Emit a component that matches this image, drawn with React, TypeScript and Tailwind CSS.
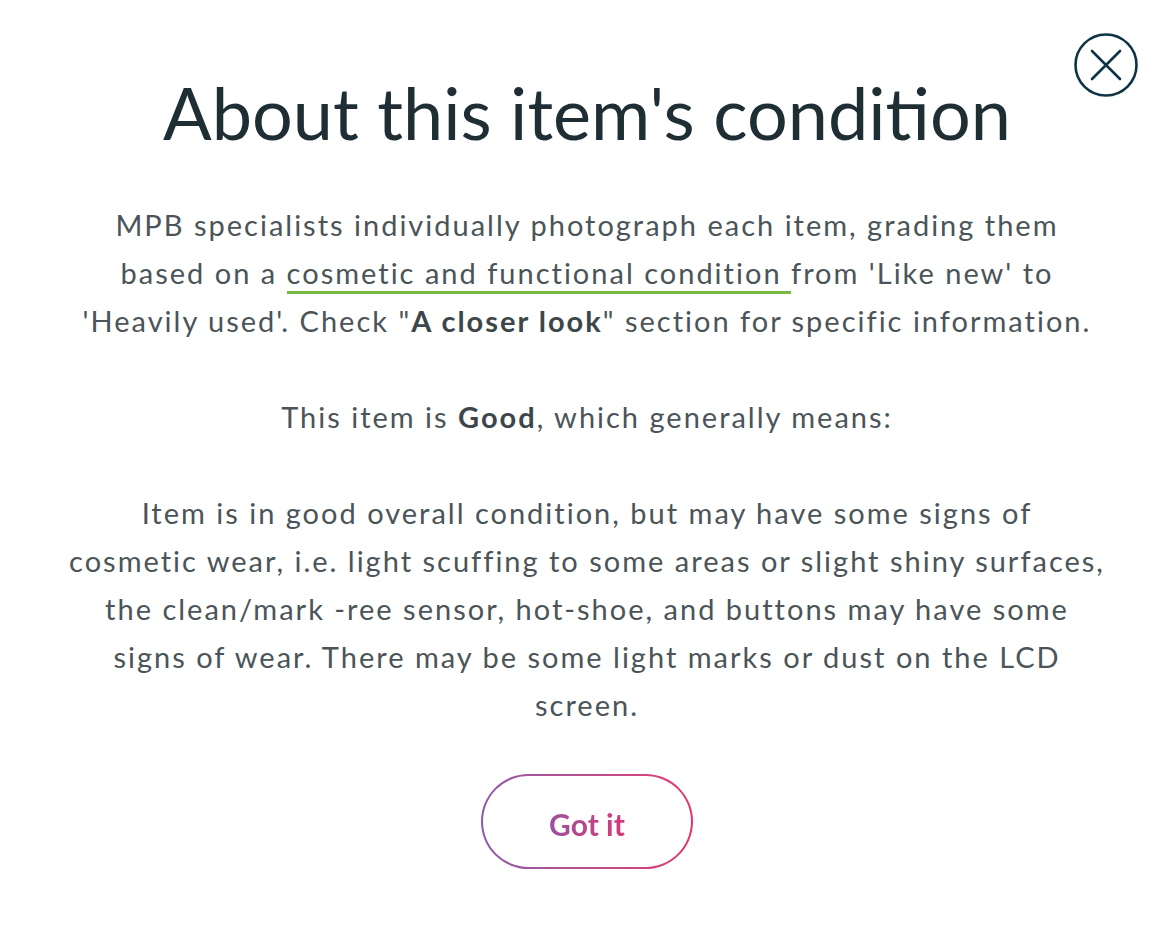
import React from "react";

const B = ({ children }: { children: React.ReactNode }) => (
  <b className="font-bold text-[#3d464b]">{children}</b>
);

export default function App() {
  return (
    <div className="w-[1174px] h-[934px] bg-white relative font-['Lato',sans-serif] overflow-hidden">
      <button className="absolute left-[1074px] top-[33px] w-[64px] h-[64px]" aria-label="Close">
        <svg width="64" height="64" viewBox="0 0 64 64" fill="none">
          <circle cx="32" cy="32" r="30.5" stroke="#0d3444" strokeWidth="2.6" />
          <path d="M18 18 L46 46 M46 18 L18 46" stroke="#0d3444" strokeWidth="2.6" strokeLinecap="round" />
        </svg>
      </button>
      <div className="flex flex-col items-center pt-[69px]">
        <h1 className="text-[72px] leading-[86px] text-[#1f2d35] font-normal">About this item's condition</h1>
        <div className="mt-[46px] w-[1100px] text-center text-[29px] tracking-[2px] leading-[48px] text-[#4b5459] whitespace-nowrap">
          <p>
            <span className="block">MPB specialists individually photograph each item, grading them</span>
            <span className="block">
              based on a{" "}
              <span className="border-b-[3px] border-[#77b843] pb-[1px]">cosmetic and functional condition </span>from 'Like new' to
            </span>
            <span className="block">
              'Heavily used'. Check "<B>A closer look</B>" section for specific information.
            </span>
          </p>
          <p className="mt-[48px]">
            This item is <B>Good</B>, which generally means:
          </p>
          <p className="mt-[48px]">
            <span className="block">Item is in good overall condition, but may have some signs of</span>
            <span className="block">cosmetic wear, i.e. light scuffing to some areas or slight shiny surfaces,</span>
            <span className="block">the clean/mark -ree sensor, hot-shoe, and buttons may have some</span>
            <span className="block">signs of wear. There may be some light marks or dust on the LCD</span>
            <span className="block">screen.</span>
          </p>
        </div>
        <div className="mt-[45px] rounded-full p-[2px] bg-gradient-to-r from-[#8d58a6] to-[#e4336f]">
          <div className="w-[208px] h-[91px] rounded-full bg-white flex items-center justify-center pt-[6px]">
            <span className="text-[30px] font-bold bg-gradient-to-r from-[#9b4f9c] to-[#d9357a] bg-clip-text text-transparent">Got it</span>
          </div>
        </div>
      </div>
    </div>
  );
}
